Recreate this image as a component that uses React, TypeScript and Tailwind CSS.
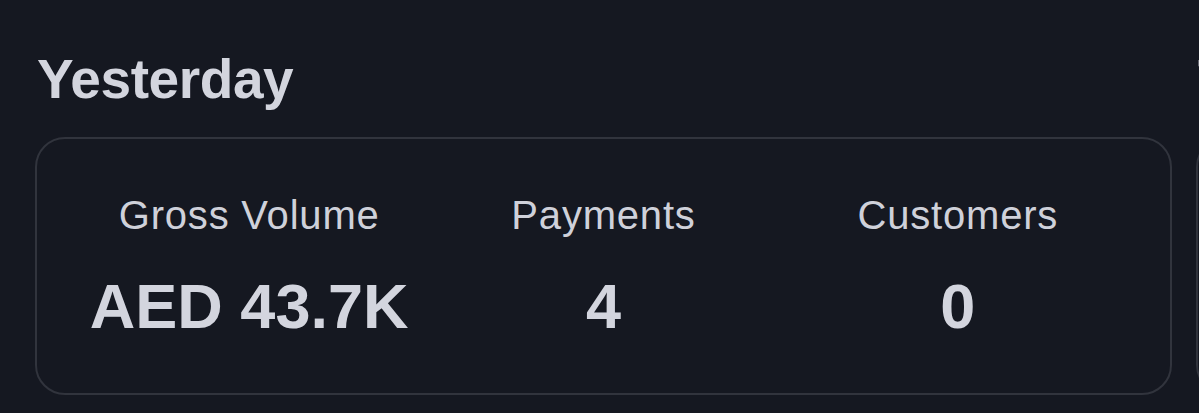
import React from 'react';

const stats = [
  { label: 'Gross Volume', value: 'AED 43.7K' },
  { label: 'Payments', value: '4' },
  { label: 'Customers', value: '0' },
];

function SummaryCard({ title, items }: { title: string; items: typeof stats }) {
  return (
    <section className="shrink-0 w-[1137px]">
      <h2 className="text-[55px] leading-none font-bold text-[#d3d5de] pl-[2px] pt-[52px] tracking-[-0.4px]">{title}</h2>
      <div className="mt-[30px] h-[258px] rounded-[30px] border-2 border-[#31343d] px-[35px] grid grid-cols-3 content-center">
        {items.map((s) => (
          <div key={s.label} className="flex flex-col items-center">
            <span className="text-[40px] leading-none text-[#cfd1da] tracking-[0.8px]">{s.label}</span>
            <span className="mt-[40px] text-[63px] leading-none font-bold text-[#d3d5de]">{s.value}</span>
          </div>
        ))}
      </div>
    </section>
  );
}

export default function App() {
  return (
    <div className="h-[413px] w-[1199px] overflow-hidden bg-[#151821] font-['Liberation_Sans',Arial,sans-serif]">
      <div className="flex gap-[24px] pl-[35px]">
        <SummaryCard title="Yesterday" items={stats} />
        <SummaryCard title="This Week" items={[]} />
      </div>
    </div>
  );
}
